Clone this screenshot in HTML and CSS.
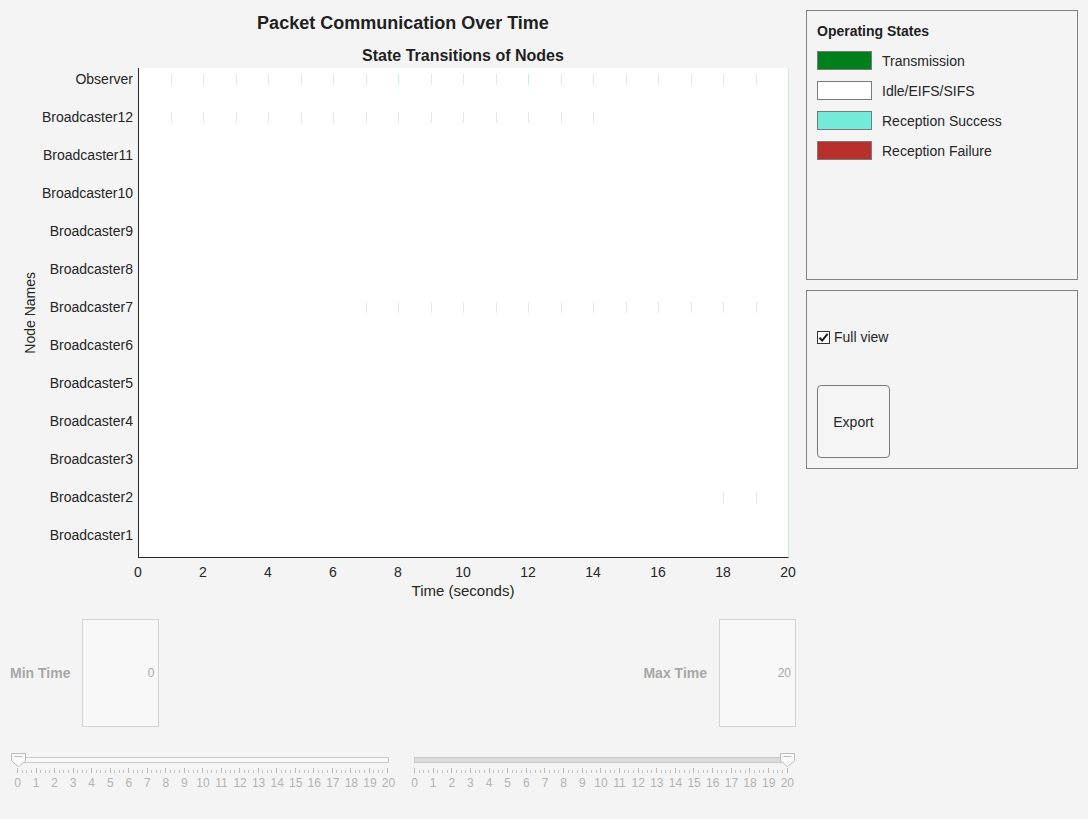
FILE: index.html
```html
<!DOCTYPE html>
<html>
<head>
<meta charset="utf-8">
<title>Packet Communication Over Time</title>
<link rel="stylesheet" href="styles.css">
</head>
<body>
<div class="app">
  <div class="main">
    <h1 class="title">Packet Communication Over Time</h1>
    <h2 class="subtitle">State Transitions of Nodes</h2>
    <div class="chart">
      <div class="ylabel"><span>Node Names</span></div>
      <div class="rowlabels">
        <div>Observer</div>
        <div>Broadcaster12</div>
        <div>Broadcaster11</div>
        <div>Broadcaster10</div>
        <div>Broadcaster9</div>
        <div>Broadcaster8</div>
        <div>Broadcaster7</div>
        <div>Broadcaster6</div>
        <div>Broadcaster5</div>
        <div>Broadcaster4</div>
        <div>Broadcaster3</div>
        <div>Broadcaster2</div>
        <div>Broadcaster1</div>
      </div>
      <div class="plot">
        <div class="rows">
          <div class="row">
            <i class="tk" style="left:32px"></i><i class="tk" style="left:64px"></i><i class="tk" style="left:97px"></i><i class="tk" style="left:129px"></i><i class="tk" style="left:162px"></i><i class="tk" style="left:194px"></i><i class="tk" style="left:227px"></i><i class="tk cy" style="left:259px"></i><i class="tk" style="left:292px"></i><i class="tk" style="left:324px"></i><i class="tk" style="left:357px"></i><i class="tk cy" style="left:389px"></i><i class="tk" style="left:422px"></i><i class="tk" style="left:454px"></i><i class="tk" style="left:487px"></i><i class="tk" style="left:519px"></i><i class="tk" style="left:552px"></i><i class="tk" style="left:584px"></i><i class="tk" style="left:617px"></i>
          </div>
          <div class="row">
            <i class="tk" style="left:32px"></i><i class="tk" style="left:64px"></i><i class="tk" style="left:97px"></i><i class="tk" style="left:129px"></i><i class="tk" style="left:162px"></i><i class="tk" style="left:194px"></i><i class="tk" style="left:227px"></i><i class="tk" style="left:259px"></i><i class="tk" style="left:292px"></i><i class="tk" style="left:324px"></i><i class="tk" style="left:357px"></i><i class="tk" style="left:389px"></i><i class="tk" style="left:422px"></i><i class="tk" style="left:454px"></i>
          </div>
          <div class="row"></div>
          <div class="row"></div>
          <div class="row"></div>
          <div class="row"></div>
          <div class="row">
            <i class="tk" style="left:227px"></i><i class="tk" style="left:259px"></i><i class="tk" style="left:292px"></i><i class="tk" style="left:324px"></i><i class="tk" style="left:357px"></i><i class="tk" style="left:389px"></i><i class="tk" style="left:422px"></i><i class="tk" style="left:454px"></i><i class="tk" style="left:487px"></i><i class="tk" style="left:519px"></i><i class="tk" style="left:552px"></i><i class="tk" style="left:584px"></i><i class="tk" style="left:617px"></i>
          </div>
          <div class="row"></div>
          <div class="row"></div>
          <div class="row"></div>
          <div class="row"></div>
          <div class="row">
            <i class="tk" style="left:584px"></i><i class="tk" style="left:617px"></i>
          </div>
          <div class="row"></div>
        </div>
      </div>
    </div>
    <div class="xticks">
      <span>0</span><span>2</span><span>4</span><span>6</span><span>8</span><span>10</span><span>12</span><span>14</span><span>16</span><span>18</span><span>20</span>
    </div>
    <div class="xlabel">Time (seconds)</div>

    <div class="timeinputs">
      <div class="tgroup">
        <span class="tlabel">Min Time</span>
        <div class="tbox">0</div>
      </div>
      <div class="tgroup">
        <span class="tlabel">Max Time</span>
        <div class="tbox">20</div>
      </div>
    </div>

    <div class="sliders">
      <div class="slider left">
        <div class="track"></div>
        <svg class="thumb thumb-left" width="15" height="14" viewBox="0 0 15 14"><path d="M0.5 0.5H14.5V8L7.5 13.5L0.5 8Z" fill="#fafafa" stroke="#bdbdbd"/><path d="M3.5 3.5H11.5" stroke="#bdbdbd"/></svg>
        <div class="ticks"><b></b><i></i><i></i><i></i><b></b><i></i><i></i><i></i><b></b><i></i><i></i><i></i><b></b><i></i><i></i><i></i><b></b><i></i><i></i><i></i><b></b><i></i><i></i><i></i><b></b><i></i><i></i><i></i><b></b><i></i><i></i><i></i><b></b><i></i><i></i><i></i><b></b><i></i><i></i><i></i><b></b><i></i><i></i><i></i><b></b><i></i><i></i><i></i><b></b><i></i><i></i><i></i><b></b><i></i><i></i><i></i><b></b><i></i><i></i><i></i><b></b><i></i><i></i><i></i><b></b><i></i><i></i><i></i><b></b><i></i><i></i><i></i><b></b><i></i><i></i><i></i><b></b><i></i><i></i><i></i><b></b></div>
        <div class="nums"><span>0</span><span>1</span><span>2</span><span>3</span><span>4</span><span>5</span><span>6</span><span>7</span><span>8</span><span>9</span><span>10</span><span>11</span><span>12</span><span>13</span><span>14</span><span>15</span><span>16</span><span>17</span><span>18</span><span>19</span><span>20</span></div>
      </div>
      <div class="slider right">
        <div class="track filled"></div>
        <svg class="thumb thumb-right" width="15" height="14" viewBox="0 0 15 14"><path d="M0.5 0.5H14.5V8L7.5 13.5L0.5 8Z" fill="#fafafa" stroke="#bdbdbd"/><path d="M3.5 3.5H11.5" stroke="#bdbdbd"/></svg>
        <div class="ticks"><b></b><i></i><i></i><i></i><b></b><i></i><i></i><i></i><b></b><i></i><i></i><i></i><b></b><i></i><i></i><i></i><b></b><i></i><i></i><i></i><b></b><i></i><i></i><i></i><b></b><i></i><i></i><i></i><b></b><i></i><i></i><i></i><b></b><i></i><i></i><i></i><b></b><i></i><i></i><i></i><b></b><i></i><i></i><i></i><b></b><i></i><i></i><i></i><b></b><i></i><i></i><i></i><b></b><i></i><i></i><i></i><b></b><i></i><i></i><i></i><b></b><i></i><i></i><i></i><b></b><i></i><i></i><i></i><b></b><i></i><i></i><i></i><b></b><i></i><i></i><i></i><b></b><i></i><i></i><i></i><b></b></div>
        <div class="nums"><span>0</span><span>1</span><span>2</span><span>3</span><span>4</span><span>5</span><span>6</span><span>7</span><span>8</span><span>9</span><span>10</span><span>11</span><span>12</span><span>13</span><span>14</span><span>15</span><span>16</span><span>17</span><span>18</span><span>19</span><span>20</span></div>
      </div>
    </div>
  </div>

  <div class="side">
    <div class="panel legend">
      <div class="legend-title">Operating States</div>
      <div class="legend-list">
        <div class="legend-item"><span class="swatch sw-tx"></span><span>Transmission</span></div>
        <div class="legend-item"><span class="swatch sw-idle"></span><span>Idle/EIFS/SIFS</span></div>
        <div class="legend-item"><span class="swatch sw-ok"></span><span>Reception Success</span></div>
        <div class="legend-item"><span class="swatch sw-fail"></span><span>Reception Failure</span></div>
      </div>
    </div>
    <div class="panel controls">
      <label class="check">
        <span class="checkbox"><svg width="11" height="11" viewBox="0 0 11 11"><path d="M1.5 5.8L4.2 8.6L9.6 1.8" fill="none" stroke="#1a1a1a" stroke-width="2"/></svg></span>
        <span>Full view</span>
      </label>
      <button class="export">Export</button>
    </div>
  </div>
</div>
</body>
</html>
```

FILE: styles.css
```css
* { box-sizing: border-box; }
html, body {
  margin: 0;
  padding: 0;
  background: #f4f4f4;
  font-family: "Liberation Sans", Arial, sans-serif;
  color: #262626;
}
.app {
  display: flex;
  width: 1088px;
  height: 819px;
}
.main {
  width: 806px;
  flex: none;
}
.title {
  margin: 0;
  height: 44px;
  line-height: 46px;
  font-size: 18px;
  font-weight: bold;
  text-align: center;
  color: #1f1f1f;
}
.subtitle {
  margin: 0 0 0 138px;
  width: 650px;
  height: 24px;
  line-height: 24px;
  font-size: 16px;
  font-weight: bold;
  text-align: center;
  color: #1f1f1f;
}
.chart {
  display: flex;
  height: 490px;
}
.ylabel {
  width: 40px;
  flex: none;
  display: flex;
  align-items: center;
  justify-content: flex-end;
  padding-right: 2px;
}
.ylabel span {
  writing-mode: vertical-rl;
  transform: rotate(180deg);
  font-size: 14px;
  line-height: 16px;
  white-space: nowrap;
}
.rowlabels {
  width: 93px;
  flex: none;
  margin-right: 5px;
  margin-top: -8px;
  font-size: 14px;
  text-align: right;
  white-space: nowrap;
}
.rowlabels div {
  height: 38px;
  line-height: 38px;
}
.plot {
  width: 651px;
  height: 490px;
  flex: none;
  background: #ffffff;
  border-left: 1px solid #262626;
  border-bottom: 1px solid #262626;
  border-right: 1px solid #c6efc6;
  position: relative;
}
.rows {
  margin-top: -8px;
}
.row {
  height: 38px;
  position: relative;
}
.tk {
  position: absolute;
  top: 14px;
  width: 1px;
  height: 11px;
  background: #dfe9e7;
}
.tk.cy {
  background: #c2f1ea;
}
.xticks {
  margin-left: 138px;
  width: 650px;
  display: flex;
  justify-content: space-between;
  padding-top: 6px;
  height: 22px;
  line-height: 16px;
  font-size: 14px;
}
.xticks span {
  width: 0;
  display: flex;
  justify-content: center;
  white-space: nowrap;
}
.xlabel {
  margin: 2px 0 0 138px;
  width: 650px;
  line-height: 18px;
  font-size: 15px;
  text-align: center;
}
.timeinputs {
  margin-top: 19px;
  display: flex;
  justify-content: space-between;
  padding: 0 10px 0 10px;
}
.tgroup {
  display: flex;
  align-items: center;
  gap: 12px;
}
.tlabel {
  font-size: 14px;
  font-weight: bold;
  color: #a7a7a7;
  white-space: nowrap;
}
.tbox {
  width: 77px;
  height: 108px;
  border: 1px solid #d3d3d3;
  background: #f8f8f8;
  display: flex;
  align-items: center;
  justify-content: flex-end;
  padding-right: 4px;
  font-size: 12px;
  color: #a9a9a9;
}
.sliders {
  display: flex;
  gap: 25px;
  margin-top: 26px;
  padding-left: 17px;
  padding-top: 4px;
}
.slider {
  position: relative;
}
.slider.left { width: 372px; }
.slider.right { width: 374px; }
.track {
  height: 6px;
  border: 1px solid #c9c9c9;
  background: #f8f8f8;
}
.track.filled {
  background: #dcdcdc;
}
.thumb {
  position: absolute;
  top: -4px;
  display: block;
}
.thumb-left { left: -6px; }
.thumb-right { left: 366px; }
.ticks {
  margin-top: 5px;
  height: 5px;
  display: flex;
  justify-content: space-between;
  align-items: flex-end;
}
.ticks b {
  display: block;
  width: 1px;
  height: 5px;
  background: #b9b9b9;
}
.ticks i {
  display: block;
  width: 1px;
  height: 3px;
  background: #c4c4c4;
}
.nums {
  margin-top: 3px;
  display: flex;
  justify-content: space-between;
  line-height: 14px;
  font-size: 12px;
  color: #b3b3b3;
}
.slider.left .nums { width: 371px; margin-left: 0.5px; }
.slider.right .nums { width: 373px; margin-left: 0.5px; }
.nums span {
  width: 0;
  display: flex;
  justify-content: center;
  white-space: nowrap;
}
.side {
  width: 272px;
  flex: none;
  margin-top: 10px;
  display: flex;
  flex-direction: column;
  gap: 10px;
}
.panel {
  border: 1px solid #828282;
  padding: 0 10px;
}
.legend {
  height: 270px;
  padding-top: 11px;
}
.legend-title {
  font-size: 14px;
  font-weight: bold;
  line-height: 18px;
  color: #1f1f1f;
}
.legend-list {
  margin-top: 11px;
  display: flex;
  flex-direction: column;
  gap: 11px;
}
.legend-item {
  display: flex;
  align-items: center;
  gap: 10px;
  height: 19px;
  font-size: 14px;
}
.swatch {
  width: 55px;
  height: 19px;
  border: 1px solid #7a7a7a;
  flex: none;
}
.sw-tx { background: #00801a; }
.sw-idle { background: #ffffff; }
.sw-ok { background: #74eadb; }
.sw-fail { background: #b8302c; }
.controls {
  height: 179px;
  padding-top: 39px;
  display: flex;
  flex-direction: column;
  align-items: flex-start;
}
.check {
  display: flex;
  align-items: center;
  gap: 4px;
  font-size: 14px;
  line-height: 14px;
}
.checkbox {
  width: 13px;
  height: 13px;
  border: 1px solid #333333;
  background: #ffffff;
  display: flex;
  align-items: center;
  justify-content: center;
}
.checkbox svg { display: block; }
.export {
  margin-top: 41px;
  width: 73px;
  height: 73px;
  border: 1px solid #7a7a7a;
  border-radius: 4px;
  background: #f5f5f5;
  font-family: "Liberation Sans", Arial, sans-serif;
  font-size: 14px;
  color: #262626;
  padding: 0;
}
```
